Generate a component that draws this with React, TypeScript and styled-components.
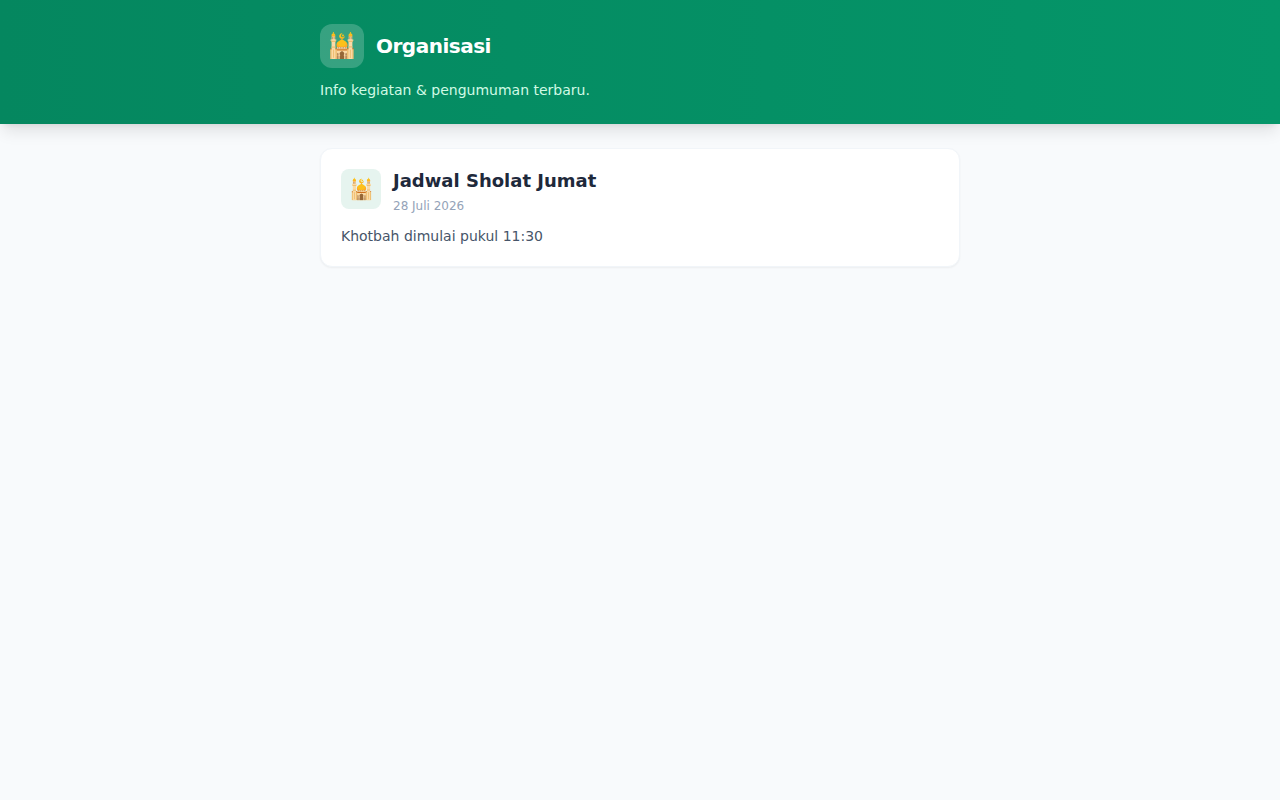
import React from "react";
import styled, { createGlobalStyle } from "styled-components";

const GlobalStyle = createGlobalStyle`
  *, *::before, *::after { box-sizing: border-box; }
  body {
    margin: 0;
    min-height: 100vh;
    background: #f8fafc;
    color: #1e293b;
    font-family: "DejaVu Sans", sans-serif;
    line-height: 24px;
  }
  h1, h2, p { margin: 0; }
`;

const Header = styled.header`
  padding: 24px 16px;
  color: #fff;
  background: linear-gradient(to right, #05875f, #059669);
  box-shadow: 0 10px 15px -3px rgba(0, 0, 0, 0.1), 0 4px 6px -4px rgba(0, 0, 0, 0.1);
`;

const Container = styled.div`
  max-width: 640px;
  margin: 0 auto;
`;

const Brand = styled.div`
  display: flex;
  align-items: center;
  gap: 12px;
`;

const Logo = styled.span`
  display: flex;
  align-items: center;
  justify-content: center;
  width: 44px;
  height: 44px;
  border-radius: 12px;
  background: rgba(255, 255, 255, 0.2);
  font-size: 24px;
`;

const Title = styled.h1`
  font-size: 20px;
  line-height: 28px;
  font-weight: 700;
  letter-spacing: -0.025em;
`;

const Tagline = styled.p`
  margin-top: 12px;
  font-size: 14px;
  line-height: 20px;
  color: #d1fae5;
`;

const Main = styled.main`
  padding: 24px 16px;
`;

const Card = styled.article`
  padding: 20px;
  border: 1px solid #f1f5f9;
  border-radius: 12px;
  background: #fff;
  box-shadow: 0 1px 2px rgba(0, 0, 0, 0.05);
`;

const CardHead = styled.div`
  display: flex;
  align-items: flex-start;
  gap: 12px;
`;

const CardIcon = styled.span`
  display: flex;
  align-items: center;
  justify-content: center;
  width: 40px;
  height: 40px;
  border-radius: 8px;
  background: #e6f4ef;
  font-size: 20px;
`;

const CardTitle = styled.h2`
  font-size: 18px;
  line-height: 24px;
  font-weight: 700;
`;

const CardDate = styled.p`
  margin-top: 5px;
  font-size: 12px;
  line-height: 16px;
  color: #94a3b8;
`;

const CardText = styled.p`
  margin-top: 12px;
  font-size: 14px;
  line-height: 20px;
  color: #475569;
`;

const posts = [
  { icon: "🕌", title: "Jadwal Sholat Jumat", date: "28 Juli 2026", text: "Khotbah dimulai pukul 11:30" },
];

export default function App() {
  return (
    <>
      <GlobalStyle />
      <Header>
        <Container>
          <Brand>
            <Logo>🕌</Logo>
            <Title>Organisasi</Title>
          </Brand>
          <Tagline>Info kegiatan &amp; pengumuman terbaru.</Tagline>
        </Container>
      </Header>
      <Main>
        <Container>
          {posts.map((post) => (
            <Card key={post.title}>
              <CardHead>
                <CardIcon>{post.icon}</CardIcon>
                <div>
                  <CardTitle>{post.title}</CardTitle>
                  <CardDate>{post.date}</CardDate>
                </div>
              </CardHead>
              <CardText>{post.text}</CardText>
            </Card>
          ))}
        </Container>
      </Main>
    </>
  );
}
